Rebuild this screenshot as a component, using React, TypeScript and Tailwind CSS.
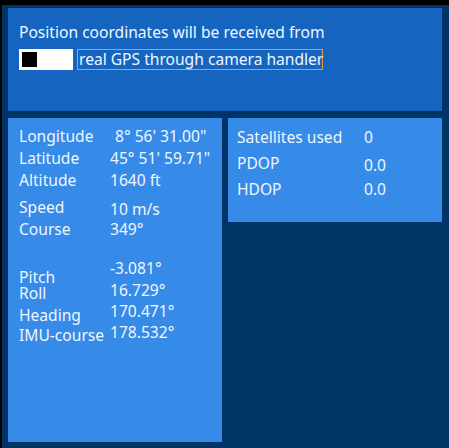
const font = { fontFamily: '"Noto Sans", "Open Sans", sans-serif' };

function Row({ label, value, h = 22, valuePad = 0, valueShift = 0 }: { label: string; value: string; h?: number; valuePad?: number; valueShift?: number }) {
  return (
    <div className="flex" style={{ height: h, lineHeight: `${h}px` }}>
      <span className="w-[91px] shrink-0">{label}</span>
      <span style={{ paddingLeft: valuePad, marginTop: valueShift }}>{value}</span>
    </div>
  );
}

export default function App() {
  return (
    <div className="w-[449px] h-[448px] bg-black pt-[5px] pl-[2px] text-[15.6px] text-[#f0f6ff]" style={font}>
      <div className="h-full flex flex-col gap-[7px] bg-[#003366] pt-[3px] pl-[6px] pr-[7px] pb-[6px]">
        {/* source panel */}
        <div className="h-[103px] shrink-0 bg-[#1565c0] pl-[11px] pt-[13px]">
          <div className="h-[22px] leading-[22px]">Position coordinates will be received from</div>
          <div className="flex items-center gap-[4px] mt-[6px]">
            <div className="w-[54px] h-[21px] bg-white flex items-center pl-[3px]">
              <div className="w-[15px] h-[15px] bg-black" />
            </div>
            <div className="h-[21px] w-[246px] border border-[#f0943a] leading-[19px] pl-[1px] whitespace-nowrap">
              real GPS through camera handler
            </div>
          </div>
        </div>

        <div className="flex flex-1 gap-[6px] items-start">
          {/* position / attitude */}
          <div className="w-[214px] h-[324px] bg-[#368be8] pl-[11px] pt-[7px]">
            <Row label="Longitude" value={'8° 56\' 31.00"'} valuePad={5} />
            <Row label="Latitude" value={'45° 51\' 59.71"'} />
            <Row label="Altitude" value="1640 ft" />
            <div className="h-[5px]" />
            <Row label="Speed" value="10 m/s" valueShift={2} />
            <Row label="Course" value="349°" />
            <div className="flex mt-[17px]">
              <div className="w-[91px] shrink-0 pt-[10px]">
                <div className="h-[18px] leading-[20px]">Pitch</div>
                <div className="h-[18px] leading-[16px]">Roll</div>
                <div className="h-[20px] leading-[20px] mt-[2px]">Heading</div>
                <div className="h-[20px] leading-[20px]">IMU-course</div>
              </div>
              <div>
                <div className="h-[22px] leading-[22px]">-3.081°</div>
                <div className="h-[22px] leading-[22px]">16.729°</div>
                <div className="h-[21px] leading-[21px]">170.471°</div>
                <div className="h-[20px] leading-[20px]">178.532°</div>
              </div>
            </div>
          </div>

          {/* satellites */}
          <div className="w-[214px] h-[104px] bg-[#368be8] pl-[9px] pt-[8px]">
            <div className="flex h-[22px] leading-[22px]">
              <span className="w-[127px] shrink-0">Satellites used</span>
              <span>0</span>
            </div>
            <div className="flex h-[26px] leading-[22px] mt-[4px]">
              <span className="w-[127px] shrink-0">PDOP</span>
              <span className="mt-[2px]">0.0</span>
            </div>
            <div className="flex h-[22px] leading-[22px]">
              <span className="w-[127px] shrink-0">HDOP</span>
              <span>0.0</span>
            </div>
          </div>
        </div>
      </div>
    </div>
  );
}
